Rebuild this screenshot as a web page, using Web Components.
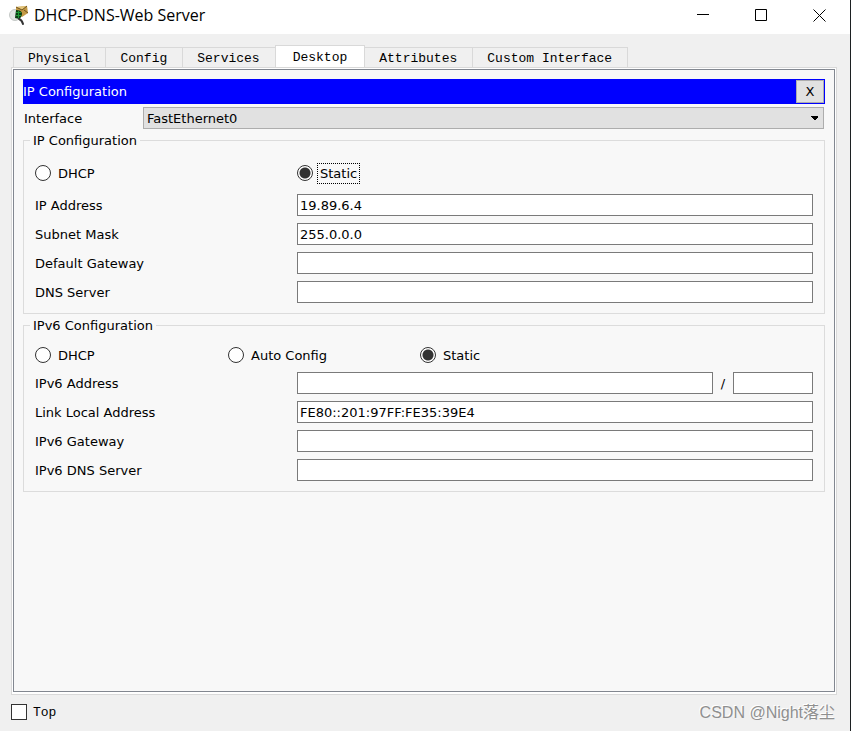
<!DOCTYPE html>
<html lang="en">
<head>
<meta charset="utf-8">
<meta name="viewport" content="width=device-width, initial-scale=1">
<title>DHCP-DNS-Web Server</title>
<style>
  :root {
    --bg-window: #f0f0f0;
    --bg-panel: #f8f8f8;
    --bg-control: #e1e1e1;
    --border-light: #d9d9d9;
    --border-pane: #828790;
    --border-control: #adadad;
    --border-input: #7a7a7a;
    --font-ui: Verdana, "DejaVu Sans", sans-serif;
    --font-mono: "Liberation Mono", monospace;
    --font-title: "Open Sans", "Noto Sans", sans-serif;
  }

  body {
    margin: 0;
    background: #1c2022;
    color: #000;
    font: 13px/19px var(--font-ui);
  }
</style>
</head>
<body>
<device-window>
  <title-bar slot="title" label="DHCP-DNS-Web Server"></title-bar>
  <tab-strip slot="tabs" tabs="Physical,Config,Services,Desktop,Attributes,Custom Interface" active="Desktop"></tab-strip>

  <app-header label="IP Configuration"></app-header>
  <interface-select label="Interface" value="FastEthernet0"></interface-select>

  <config-group label="IP Configuration">
    <radio-row name="ipv4" options="DHCP,Static" selected="Static" focused roomy></radio-row>
    <text-field label="IP Address" value="19.89.6.4"></text-field>
    <text-field label="Subnet Mask" value="255.0.0.0"></text-field>
    <text-field label="Default Gateway"></text-field>
    <text-field label="DNS Server"></text-field>
  </config-group>

  <config-group label="IPv6 Configuration">
    <radio-row name="ipv6" options="DHCP,Auto Config,Static" selected="Static"></radio-row>
    <text-field label="IPv6 Address" prefix></text-field>
    <text-field label="Link Local Address" value="FE80::201:97FF:FE35:39E4"></text-field>
    <text-field label="IPv6 Gateway"></text-field>
    <text-field label="IPv6 DNS Server"></text-field>
  </config-group>

  <window-footer slot="footer" label="Top">CSDN @Night落尘</window-footer>
</device-window>

<script>
/**
 * Shared base: opens the shadow root and renders once connected
 */
class BaseElement extends HTMLElement {
  constructor() {
    super();
    this.attachShadow({ mode: "open" });
  }

  connectedCallback() {
    this.render();
  }

  attr(name) {
    return this.getAttribute(name) || "";
  }

  list(name) {
    return this.attr(name).split(",");
  }
}

/** Window frame: title, tabs, content pane, footer */
class DeviceWindow extends BaseElement {
  render() {
    this.shadowRoot.innerHTML = `
      <style>
        :host {
          display: flex;
          flex-direction: column;
          min-height: 100vh;
          margin-right: 1px;
          background: var(--bg-window);
        }

        main {
          flex: 1;
          display: flex;
          flex-direction: column;
          padding: 11px 13px 0 11px;
        }

        .frame {
          flex: 1;
          display: flex;
          padding: 1px 1px 2px;
          background: #fff;
          border: 1px solid var(--border-light);
        }

        .pane {
          flex: 1;
          min-width: 0;
          display: flex;
          flex-direction: column;
          gap: 2px;
          padding: 9px;
          background: var(--bg-panel);
          border: 1px solid var(--border-pane);
        }
      </style>
      <slot name="title"></slot>
      <main>
        <slot name="tabs"></slot>
        <div class="frame"><div class="pane"><slot></slot></div></div>
      </main>
      <slot name="footer"></slot>
    `;
  }
}

class TitleBar extends BaseElement {
  render() {
    this.shadowRoot.innerHTML = `
      <style>
        :host {
          display: flex;
          align-items: center;
          height: 34px;
          padding: 0 2px 0 9px;
          background: #fff;
        }

        h1 {
          flex: 1;
          margin: 0 0 4px 5px;
          font: 16px/22px var(--font-title);
        }

        .logo {
          margin-bottom: 4px;
        }

        button {
          display: flex;
          align-items: center;
          justify-content: center;
          width: 58px;
          height: 30px;
          margin-bottom: 4px;
          padding: 0;
          background: none;
          border: none;
        }

        button svg {
          fill: none;
          stroke: #000;
        }
      </style>
      <svg class="logo" width="20" height="20" viewBox="0 0 20 20" aria-hidden="true">
        <circle cx="6" cy="10" r="5.5" fill="#e2e5e3" stroke="#c4c8c6"/>
        <path d="M7 2 L18 1 L19 8 L13 12 L7 8 Z" fill="#c49a45"/>
        <path d="M7 2 L13 5 L18 1 Z" fill="#e3c478"/>
        <path d="M7 2 L13 5 L18 1 M19 8 L15 5" fill="none" stroke="#6e5220"/>
        <path d="M7 5 Q12 5 13 8 Q13 12 10 14 L6 13 Z" fill="#0a3d14"/>
        <path d="M7 7.5 H12 M7 10.5 H12 M9.500 6 V13" stroke="#1c9a35" fill="none"/>
        <path d="M10 14 Q13 15 14 19" stroke="#333" stroke-width="2" stroke-linecap="round" fill="none"/>
      </svg>
      <h1>${this.attr("label")}</h1>
      <button aria-label="Minimize">
        <svg width="13" height="13"><path d="M0 5.5 H12"/></svg>
      </button>
      <button aria-label="Maximize">
        <svg width="13" height="13"><path d="M.5 .5 H11.5 V11.5 H.5 Z"/></svg>
      </button>
      <button aria-label="Close">
        <svg width="13" height="13"><path d="M.5 .5 L12.5 12.5 M12.5 .5 L.5 12.5"/></svg>
      </button>
    `;
  }
}

class TabStrip extends BaseElement {
  render() {
    const active = this.attr("active");
    this.shadowRoot.innerHTML = `
      <style>
        :host {
          display: flex;
          align-items: flex-end;
          padding-left: 2px;
        }

        button {
          height: 20px;
          padding: 2px 15px 0 14px;
          background: var(--bg-window);
          border: 1px solid var(--border-light);
          border-width: 1px 0 0 1px;
          color: inherit;
          font: 13px/17px var(--font-mono);
          white-space: nowrap;
        }

        button:last-child {
          border-right-width: 1px;
        }

        .active {
          height: 22px;
          padding: 2px 17px 0;
          background: #fff;
          border-right-width: 1px;
        }

        .active + button {
          border-left: none;
        }
      </style>
      ${this.list("tabs").map((tab) => `
        <button role="tab" aria-selected="${tab === active}" class="${tab === active ? "active" : ""}">${tab}</button>
      `).join("")}
    `;
  }
}

class AppHeader extends BaseElement {
  render() {
    this.shadowRoot.innerHTML = `
      <style>
        :host {
          display: flex;
          align-items: center;
          justify-content: space-between;
          padding: 1px;
          padding-left: 0;
          background: #00f;
          color: #fff;
        }

        button {
          width: 28px;
          height: 23px;
          padding: 0;
          background: var(--bg-control);
          border: 1px solid var(--border-control);
          color: #000;
          font: inherit;
        }
      </style>
      <span>${this.attr("label")}</span>
      <button aria-label="Close IP Configuration">X</button>
    `;
  }
}

class InterfaceSelect extends BaseElement {
  render() {
    this.shadowRoot.innerHTML = `
      <style>
        :host {
          display: flex;
          align-items: center;
          padding: 1px 1px 0;
        }

        label {
          width: 119px;
        }

        .box {
          flex: 1;
          display: grid;
          align-items: center;
        }

        .box > * {
          grid-area: 1 / 1;
        }

        select {
          appearance: none;
          width: 100%;
          height: 22px;
          margin: 0;
          padding: 0 20px 0 3px;
          background: var(--bg-control);
          border: 1px solid var(--border-control);
          border-radius: 0;
          color: inherit;
          font: inherit;
        }

        svg {
          justify-self: end;
          margin-right: 6px;
          pointer-events: none;
        }
      </style>
      <label for="interface">${this.attr("label")}</label>
      <div class="box">
        <select id="interface"><option>${this.attr("value")}</option></select>
        <svg width="7" height="4" shape-rendering="crispEdges"><path d="M0 0 H7 V1 L4 4 H3 L0 1 Z"/></svg>
      </div>
    `;
  }
}

/** Titled box around a set of rows */
class ConfigGroup extends BaseElement {
  render() {
    this.shadowRoot.innerHTML = `
      <style>
        :host {
          display: block;
        }

        fieldset {
          min-width: 0;
          margin: 0;
          padding: 10px 6px;
          border: 1px solid #dcdcdc;
        }

        legend {
          padding: 0 3px;
        }

        .rows {
          display: flex;
          flex-direction: column;
          gap: 7px;
          padding: 0 5px;
        }
      </style>
      <fieldset>
        <legend>${this.attr("label")}</legend>
        <div class="rows"><slot></slot></div>
      </fieldset>
    `;
  }
}

class RadioRow extends BaseElement {
  render() {
    const options = this.list("options");
    const selected = this.attr("selected");
    const columns = options.length > 2 ? "193px 192px 1fr" : "262px 1fr";
    this.shadowRoot.innerHTML = `
      <style>
        :host {
          display: grid;
          grid-template-columns: ${columns};
          height: 20px;
        }

        :host([roomy]) {
          height: 27px;
        }

        label {
          display: flex;
          align-items: center;
          gap: 5px;
        }

        :host([roomy]) label {
          height: 26px;
        }

        input {
          appearance: none;
          width: 16px;
          height: 16px;
          margin: 0;
          background: #fff;
          border: 1px solid #333;
          border-radius: 50%;
        }

        input:checked {
          background: radial-gradient(circle, #333 5px, #fff 6px);
        }

        span {
          padding: 0 2px;
        }

        :host([focused]) input:checked + span {
          outline: 1px dotted #000;
        }
      </style>
      ${options.map((option) => `
        <label>
          <input type="radio" name="${this.attr("name")}" ${option === selected ? "checked" : ""}>
          <span>${option}</span>
        </label>
      `).join("")}
    `;
  }
}

/** Label and text box, with an optional prefix length box after a slash */
class TextField extends BaseElement {
  render() {
    this.shadowRoot.innerHTML = `
      <style>
        :host {
          display: flex;
          align-items: center;
        }

        label {
          width: 262px;
        }

        input {
          box-sizing: border-box;
          flex: 1;
          min-width: 0;
          height: 22px;
          padding: 0 2px;
          background: #fff;
          border: 1px solid var(--border-input);
          border-radius: 0;
          color: inherit;
          font: inherit;
        }

        .slash {
          width: 20px;
          text-align: center;
        }

        .prefix {
          flex: 0 0 80px;
        }
      </style>
      <label for="value">${this.attr("label")}</label>
      <input id="value" type="text" value="${this.attr("value")}">
      ${this.hasAttribute("prefix") ? `
        <span class="slash">/</span>
        <input class="prefix" type="text" aria-label="Prefix length">
      ` : ""}
    `;
  }
}

class WindowFooter extends BaseElement {
  render() {
    this.shadowRoot.innerHTML = `
      <style>
        :host {
          display: flex;
          align-items: center;
          justify-content: space-between;
          height: 36px;
          padding: 0 15px 0 11px;
        }

        label {
          display: flex;
          align-items: center;
          gap: 6px;
          margin-bottom: 2px;
          font: 13px/19px var(--font-mono);
        }

        input {
          box-sizing: border-box;
          appearance: none;
          width: 16px;
          height: 16px;
          margin: 0;
          background: #fff;
          border: 1px solid #333;
        }

        .mark {
          color: #8f8f8f;
          font: 16px/22px "Liberation Sans", "Noto Sans CJK SC", sans-serif;
          text-shadow: -1px -1px #fff;
        }
      </style>
      <label><input type="checkbox">${this.attr("label")}</label>
      <span class="mark"><slot></slot></span>
    `;
  }
}

customElements.define("device-window", DeviceWindow);
customElements.define("title-bar", TitleBar);
customElements.define("tab-strip", TabStrip);
customElements.define("app-header", AppHeader);
customElements.define("interface-select", InterfaceSelect);
customElements.define("config-group", ConfigGroup);
customElements.define("radio-row", RadioRow);
customElements.define("text-field", TextField);
customElements.define("window-footer", WindowFooter);
</script>
</body>
</html>
